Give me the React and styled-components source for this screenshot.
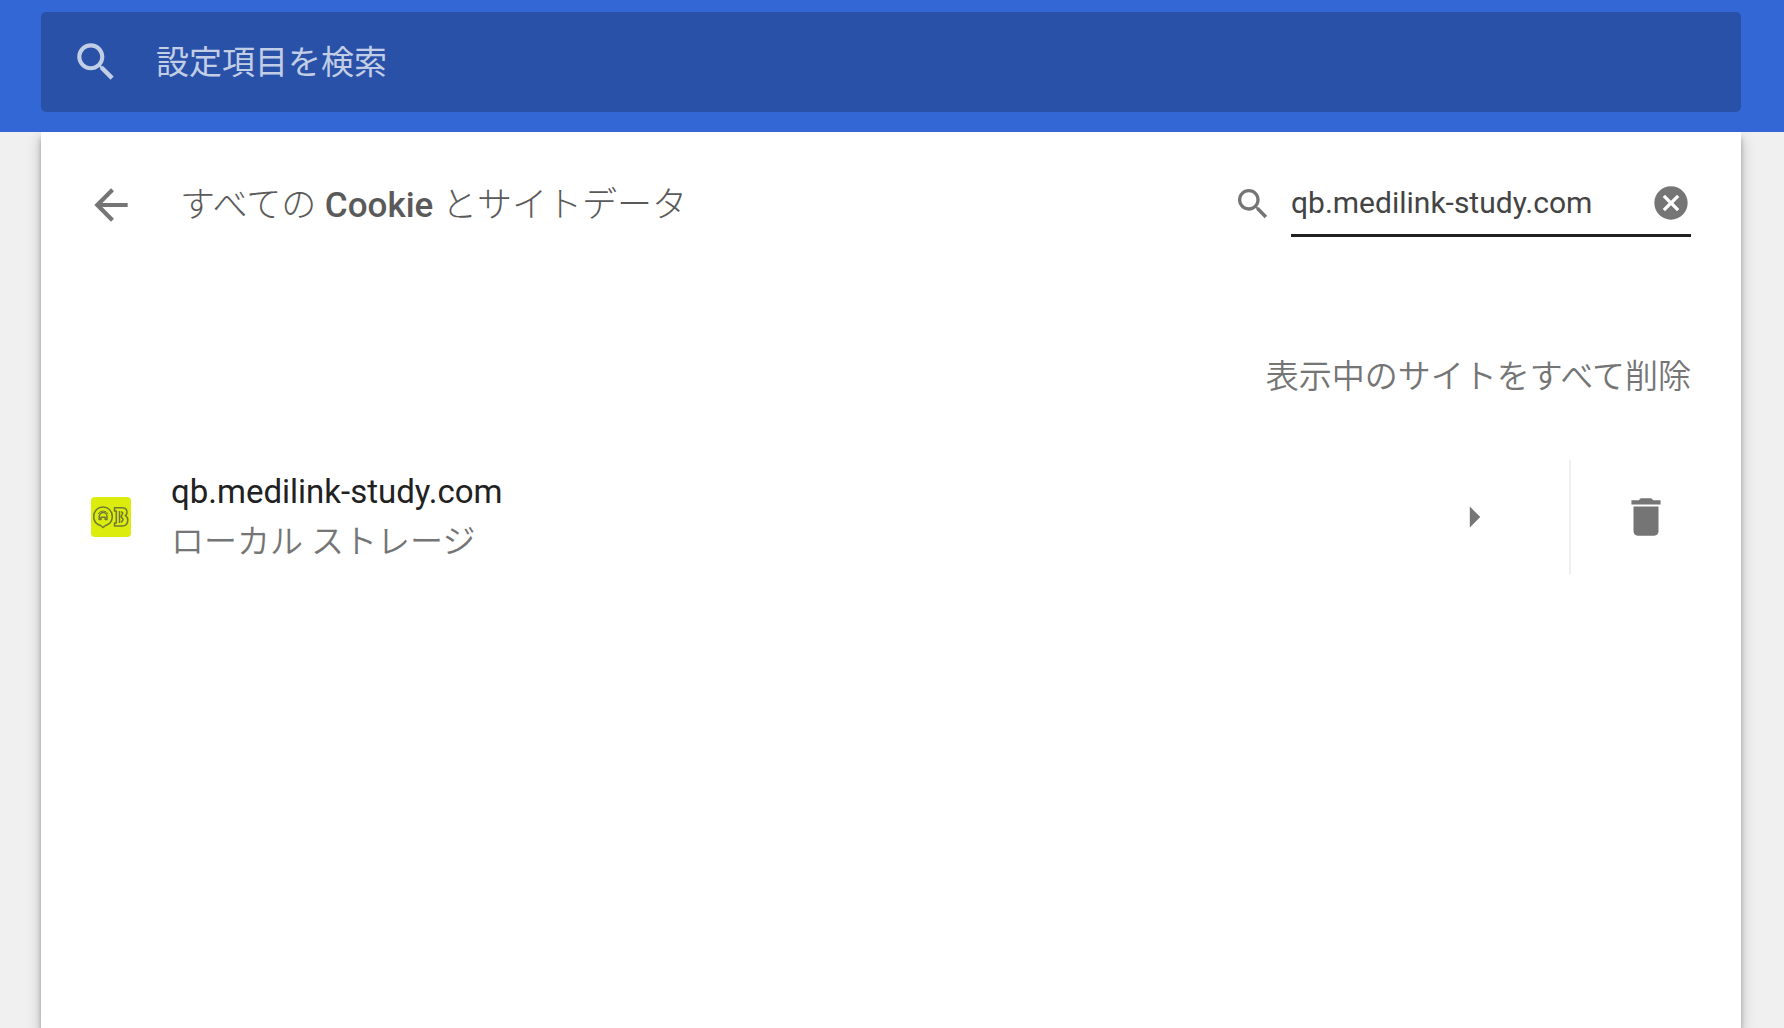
import React, { useState } from "react";
import styled, { createGlobalStyle } from "styled-components";

const SITES = [{ host: "qb.medilink-study.com", detail: "ローカル ストレージ" }];

const SearchIcon = ({ size }) => (
  <Icon viewBox="0 0 24 24" $size={size} aria-hidden="true">
    <path d="M15.5 14h-.79l-.28-.27C15.41 12.59 16 11.11 16 9.5 16 5.91 13.09 3 9.5 3S3 5.91 3 9.5 5.91 16 9.5 16c1.61 0 3.09-.59 4.23-1.57l.27.28v.79l5 4.99L20.49 19l-4.99-5zm-6 0C7.01 14 5 11.99 5 9.5S7.01 5 9.5 5 14 7.01 14 9.5 11.99 14 9.5 14z" />
  </Icon>
);

const BackIcon = () => (
  <Icon viewBox="0 0 24 24" $size={50} aria-hidden="true">
    <path d="M20 11H7.83l5.59-5.59L12 4l-8 8 8 8 1.41-1.41L7.83 13H20v-2z" />
  </Icon>
);

const ClearIcon = () => (
  <Icon viewBox="0 0 24 24" $size={40} aria-hidden="true">
    <path d="M12 2C6.47 2 2 6.47 2 12s4.47 10 10 10 10-4.47 10-10S17.53 2 12 2zm5 13.59L15.59 17 12 13.41 8.41 17 7 15.59 10.59 12 7 8.41 8.41 7 12 10.59 15.59 7 17 8.41 13.41 12 17 15.59z" />
  </Icon>
);

const ArrowRightIcon = () => (
  <Icon viewBox="0 0 24 24" $size={50} aria-hidden="true">
    <path d="M10 7l5 5-5 5z" />
  </Icon>
);

const DeleteIcon = () => (
  <Icon viewBox="0 0 24 24" $size={50} aria-hidden="true">
    <path d="M6 19c0 1.1.9 2 2 2h8c1.1 0 2-.9 2-2V7H6v12zM19 4h-3.5l-1-1h-5l-1 1H5v2h14V4z" />
  </Icon>
);

const Favicon = () => (
  <Icon viewBox="0 0 40 40" $size={40} aria-hidden="true">
    <rect width="40" height="40" rx="4" fill="#dcec0c" />
    <g fill="none" stroke="#6f7838" strokeWidth="1.5" strokeLinejoin="round">
      <path d="M9.5 28.500C5.500 27.300 2.700 23.900 2.700 19.600C2.700 14 6.700 10 12 10S21.300 14 21.300 19.600C21.300 23.900 18.500 27.300 14.500 28.500L12 30.500z" />
      <path d="M8.200 22.500v-3a3.900 3.900 0 0 1 7.800 0v3h-1.800v-2.200h-4.200v2.200z" />
      <path d="M7 17a5.800 5.800 0 0 1 10.200 0" strokeWidth="1" />
      <path d="M23.500 10.800h7.500c3.200 0 5 1.700 5 4.400 0 1.500-.6 2.700-1.700 3.500 1.700.9 2.500 2.400 2.500 4.300 0 3.600-2.200 6-5.800 6h-7.500v-3h1.800V14h-1.800z" />
      <path d="M28.500 14v12M30.200 14.500l1.700 1.500-1.800 3.500 2 3-1.900 3" />
    </g>
  </Icon>
);

export default function App() {
  const [query, setQuery] = useState("qb.medilink-study.com");

  const visibleSites = SITES.filter((site) => site.host.includes(query));

  return (
    <>
      <GlobalStyle />
      <Page>
        <Header>
          <SettingsSearch>
            <SearchIcon size={50} />
            <SettingsInput
              type="search"
              placeholder="設定項目を検索"
              aria-label="設定項目を検索"
            />
          </SettingsSearch>
        </Header>
        <Panel>
          <Toolbar>
            <IconButton aria-label="戻る">
              <BackIcon />
            </IconButton>
            <Title>すべての Cookie とサイトデータ</Title>
            <SiteSearch>
              <SearchIcon size={40} />
              <Field>
                <SiteInput
                  type="text"
                  aria-label="Cookie を検索"
                  value={query}
                  onChange={(e) => setQuery(e.target.value)}
                />
                <IconButton aria-label="検索をクリア" onClick={() => setQuery("")}>
                  <ClearIcon />
                </IconButton>
              </Field>
            </SiteSearch>
          </Toolbar>
          <Actions>
            <TextButton>表示中のサイトをすべて削除</TextButton>
          </Actions>
          <SiteList>
            {visibleSites.map((site) => (
              <SiteRow key={site.host}>
                <Favicon />
                <SiteText>
                  <Host>{site.host}</Host>
                  <Detail>{site.detail}</Detail>
                </SiteText>
                <IconButton aria-label={site.host + " の詳細"}>
                  <ArrowRightIcon />
                </IconButton>
                <DeleteCell>
                  <IconButton aria-label={site.host + " を削除"}>
                    <DeleteIcon />
                  </IconButton>
                </DeleteCell>
              </SiteRow>
            ))}
          </SiteList>
        </Panel>
      </Page>
    </>
  );
}

const GlobalStyle = createGlobalStyle`
  * {
    box-sizing: border-box;
  }

  body {
    margin: 0;
    background-color: #f0f0f0;
    color: #212121;
    font-family: Roboto, "Noto Sans CJK JP", sans-serif;
    font-size: 33px;
  }

  button,
  input {
    font: inherit;
    color: inherit;
    background: none;
    border: none;
    outline: none;
    padding: 0;
  }

  button {
    cursor: pointer;
  }
`;

const Page = styled.div`
  min-height: 100vh;
  display: flex;
  flex-direction: column;
`;

const Header = styled.header`
  position: relative;
  z-index: 1;
  padding: 12px 43px 20px 41px;
  background-color: #3367d6;
`;

const SettingsSearch = styled.label`
  display: flex;
  align-items: center;
  gap: 35px;
  height: 100px;
  padding: 0 30px;
  border-radius: 5px;
  background-color: #2951a7;
  color: #c2cde6;
`;

const SettingsInput = styled.input`
  flex: 1;
  min-width: 0;

  &::placeholder {
    color: #c2cde6;
    opacity: 1;
  }
`;

const Panel = styled.main`
  flex: 1;
  margin: 0 43px 0 41px;
  padding: 0 50px;
  background-color: white;
  box-shadow: 0 6px 14px rgba(0, 0, 0, 0.22), 0 6px 5px rgba(0, 0, 0, 0.25);
`;

const Toolbar = styled.div`
  display: flex;
  align-items: center;
  height: 146px;
  margin-left: -5px;
`;

const Title = styled.h1`
  flex: 1;
  margin: 0 0 0 44px;
  padding-bottom: 8px;
  color: #5a5a5a;
  font-family: Roboto, "Noto Sans CJK JP Light", "Noto Sans CJK JP", sans-serif;
  font-size: 35px;
  font-weight: 500;
`;

const SiteSearch = styled.div`
  display: flex;
  align-items: center;
  gap: 18px;
  padding-bottom: 2px;
  color: #757575;
`;

const Field = styled.div`
  display: flex;
  align-items: center;
  width: 400px;
  height: 66px;
  border-bottom: 3px solid #212121;
`;

const SiteInput = styled.input`
  flex: 1;
  min-width: 0;
  color: #444;
  font-size: 30px;
`;

const Actions = styled.div`
  display: flex;
  justify-content: flex-end;
  align-items: center;
  height: 192px;
`;

const TextButton = styled.button`
  color: #757575;
  font-weight: 350;
`;

const SiteList = styled.ul`
  margin: -10px 0 0;
  padding: 0;
  list-style: none;
`;

const SiteRow = styled.li`
  display: flex;
  align-items: center;
  height: 114px;
`;

const SiteText = styled.div`
  flex: 1;
  margin-left: 40px;
  line-height: 50px;
`;

const Host = styled.div`
  color: #212121;
`;

const Detail = styled.div`
  color: #757575;
  font-weight: 350;
`;

const DeleteCell = styled.div`
  display: flex;
  align-items: center;
  height: 100%;
  margin-left: 70px;
  padding: 0 20px 0 50px;
  border-left: 2px solid #efefef;
`;

const IconButton = styled.button`
  display: flex;
  color: #757575;
`;

const Icon = styled.svg`
  flex: none;
  width: ${(props) => props.$size}px;
  height: ${(props) => props.$size}px;
  fill: currentColor;
`;
